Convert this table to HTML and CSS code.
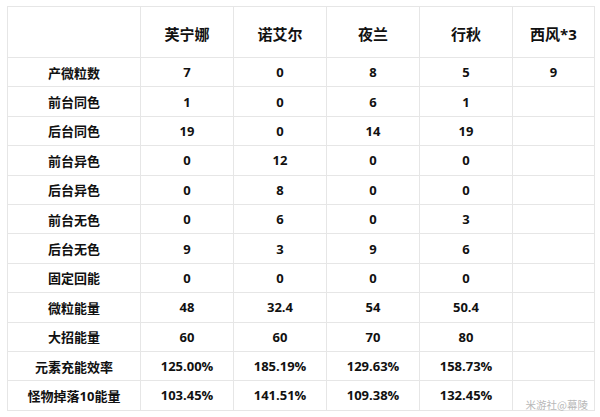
FILE: index.html
```html
<!DOCTYPE html>
<html lang="zh">
<head>
<meta charset="utf-8">
<link rel="stylesheet" href="styles.css">
</head>
<body>
<div class="wrap">
<table class="grid">
  <colgroup>
    <col class="c-label"><col class="c-val"><col class="c-val"><col class="c-val"><col class="c-val"><col class="c-last">
  </colgroup>
  <thead>
    <tr class="head"><th></th><th>芙宁娜</th><th>诺艾尔</th><th>夜兰</th><th>行秋</th><th>西风*3</th></tr>
  </thead>
  <tbody>
    <tr><td>产微粒数</td><td>7</td><td>0</td><td>8</td><td>5</td><td>9</td></tr>
    <tr><td>前台同色</td><td>1</td><td>0</td><td>6</td><td>1</td><td></td></tr>
    <tr><td>后台同色</td><td>19</td><td>0</td><td>14</td><td>19</td><td></td></tr>
    <tr><td>前台异色</td><td>0</td><td>12</td><td>0</td><td>0</td><td></td></tr>
    <tr><td>后台异色</td><td>0</td><td>8</td><td>0</td><td>0</td><td></td></tr>
    <tr><td>前台无色</td><td>0</td><td>6</td><td>0</td><td>3</td><td></td></tr>
    <tr><td>后台无色</td><td>9</td><td>3</td><td>9</td><td>6</td><td></td></tr>
    <tr><td>固定回能</td><td>0</td><td>0</td><td>0</td><td>0</td><td></td></tr>
    <tr><td>微粒能量</td><td>48</td><td>32.4</td><td>54</td><td>50.4</td><td></td></tr>
    <tr><td>大招能量</td><td>60</td><td>60</td><td>70</td><td>80</td><td></td></tr>
    <tr><td>元素充能效率</td><td>125.00%</td><td>185.19%</td><td>129.63%</td><td>158.73%</td><td></td></tr>
    <tr><td>怪物掉落10能量</td><td>103.45%</td><td>141.51%</td><td>109.38%</td><td>132.45%</td><td></td></tr>
  </tbody>
</table>
<div class="mark">米游社@幕陵</div>
</div>
</body>
</html>
```

FILE: styles.css
```css
html, body {
  margin: 0;
  padding: 0;
  background: #ffffff;
}
body {
  font-family: "Open Sans", "Noto Sans CJK SC", sans-serif;
  color: #111111;
}
.wrap {
  position: relative;
  width: 600px;
  height: 417px;
  padding: 6px 0 0 7px;
  box-sizing: border-box;
}
.grid {
  border-collapse: collapse;
  table-layout: fixed;
  width: 587px;
}
.c-label { width: 133px; }
.c-val { width: 93px; }
.c-last { width: 82px; }
.grid th, .grid td {
  border: 1px solid #e6e6e6;
  text-align: center;
  font-weight: 700;
  padding: 0;
  white-space: nowrap;
}
.grid th {
  height: 51px;
  font-size: 15px;
  padding-top: 3px;
  box-sizing: border-box;
}
.grid td {
  height: 29.4px;
  font-size: 13px;
  box-sizing: border-box;
}
.mark {
  position: absolute;
  right: 12px;
  bottom: 5px;
  font-family: "Noto Sans CJK SC", sans-serif;
  font-size: 10.5px;
  color: #b8b8b8;
}
```
